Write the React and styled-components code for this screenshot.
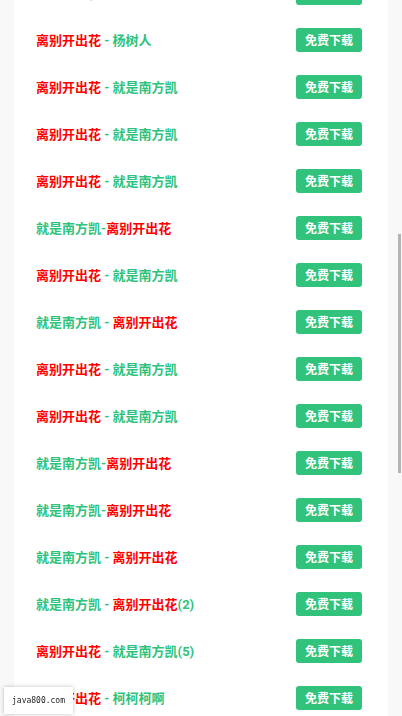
import styled, { createGlobalStyle } from "styled-components";

const GlobalStyle = createGlobalStyle`
  html, body {
    margin: 0;
    padding: 0;
    background: #f8f8f8;
    overflow: hidden;
  }
  body {
    font-family: Roboto, "Noto Sans CJK SC", sans-serif;
  }
`;

const songs = [
  [["r", "离别开出花"], ["g", " - 就是南方凯"]],
  [["r", "离别开出花"], ["g", " - 杨树人"]],
  [["r", "离别开出花"], ["g", " - 就是南方凯"]],
  [["r", "离别开出花"], ["g", " - 就是南方凯"]],
  [["r", "离别开出花"], ["g", " - 就是南方凯"]],
  [["g", "就是南方凯-"], ["r", "离别开出花"]],
  [["r", "离别开出花"], ["g", " - 就是南方凯"]],
  [["g", "就是南方凯 - "], ["r", "离别开出花"]],
  [["r", "离别开出花"], ["g", " - 就是南方凯"]],
  [["r", "离别开出花"], ["g", " - 就是南方凯"]],
  [["g", "就是南方凯-"], ["r", "离别开出花"]],
  [["g", "就是南方凯-"], ["r", "离别开出花"]],
  [["g", "就是南方凯 - "], ["r", "离别开出花"]],
  [["g", "就是南方凯 - "], ["r", "离别开出花"], ["g", "(2)"]],
  [["r", "离别开出花"], ["g", " - 就是南方凯(5)"]],
  [["r", "离别开出花"], ["g", " - 柯柯柯啊"]],
];

export default function App() {
  return (
    <>
      <GlobalStyle />
      <Panel>
        {songs.map((parts, i) => (
          <Row key={i}>
            <Title>
              {parts.map(([c, t], j) => (
                <Part key={j} $red={c === "r"}>
                  {t}
                </Part>
              ))}
            </Title>
            <DownloadButton>免费下载</DownloadButton>
          </Row>
        ))}
      </Panel>
      <ScrollThumb />
      <Watermark>java800.com</Watermark>
    </>
  );
}

const Panel = styled.div`
  margin: -31px 14px 0 14px;
  background: #fff;
  display: flex;
  flex-direction: column;
`;

const Row = styled.div`
  height: 47px;
  display: flex;
  align-items: center;
  justify-content: space-between;
  padding: 0 26px 0 22px;
`;

const Title = styled.div`
  font-size: 13px;
  font-weight: 700;
  white-space: pre;
  letter-spacing: 0;
`;

const Part = styled.span`
  color: ${(p) => (p.$red ? "#ff0000" : "#2fc27c")};
`;

const DownloadButton = styled.button`
  width: 66px;
  height: 24px;
  border: none;
  border-radius: 3px;
  background: #31c27c;
  color: #fff;
  font-family: Roboto, "Noto Sans CJK SC", sans-serif;
  font-size: 12px;
  font-weight: 700;
  padding: 0;
  cursor: pointer;
`;

const ScrollThumb = styled.div`
  position: fixed;
  right: 1px;
  top: 234px;
  width: 3px;
  height: 239px;
  background: #b4b4b4;
`;

const Watermark = styled.div`
  position: fixed;
  left: 4px;
  bottom: 2px;
  width: 69px;
  height: 27px;
  background: #fff;
  box-shadow: 0 0 4px rgba(0, 0, 0, 0.25);
  display: flex;
  align-items: center;
  justify-content: center;
  font-family: "DejaVu Sans Mono", "Liberation Mono", monospace;
  font-size: 8px;
  color: #222;
`;
